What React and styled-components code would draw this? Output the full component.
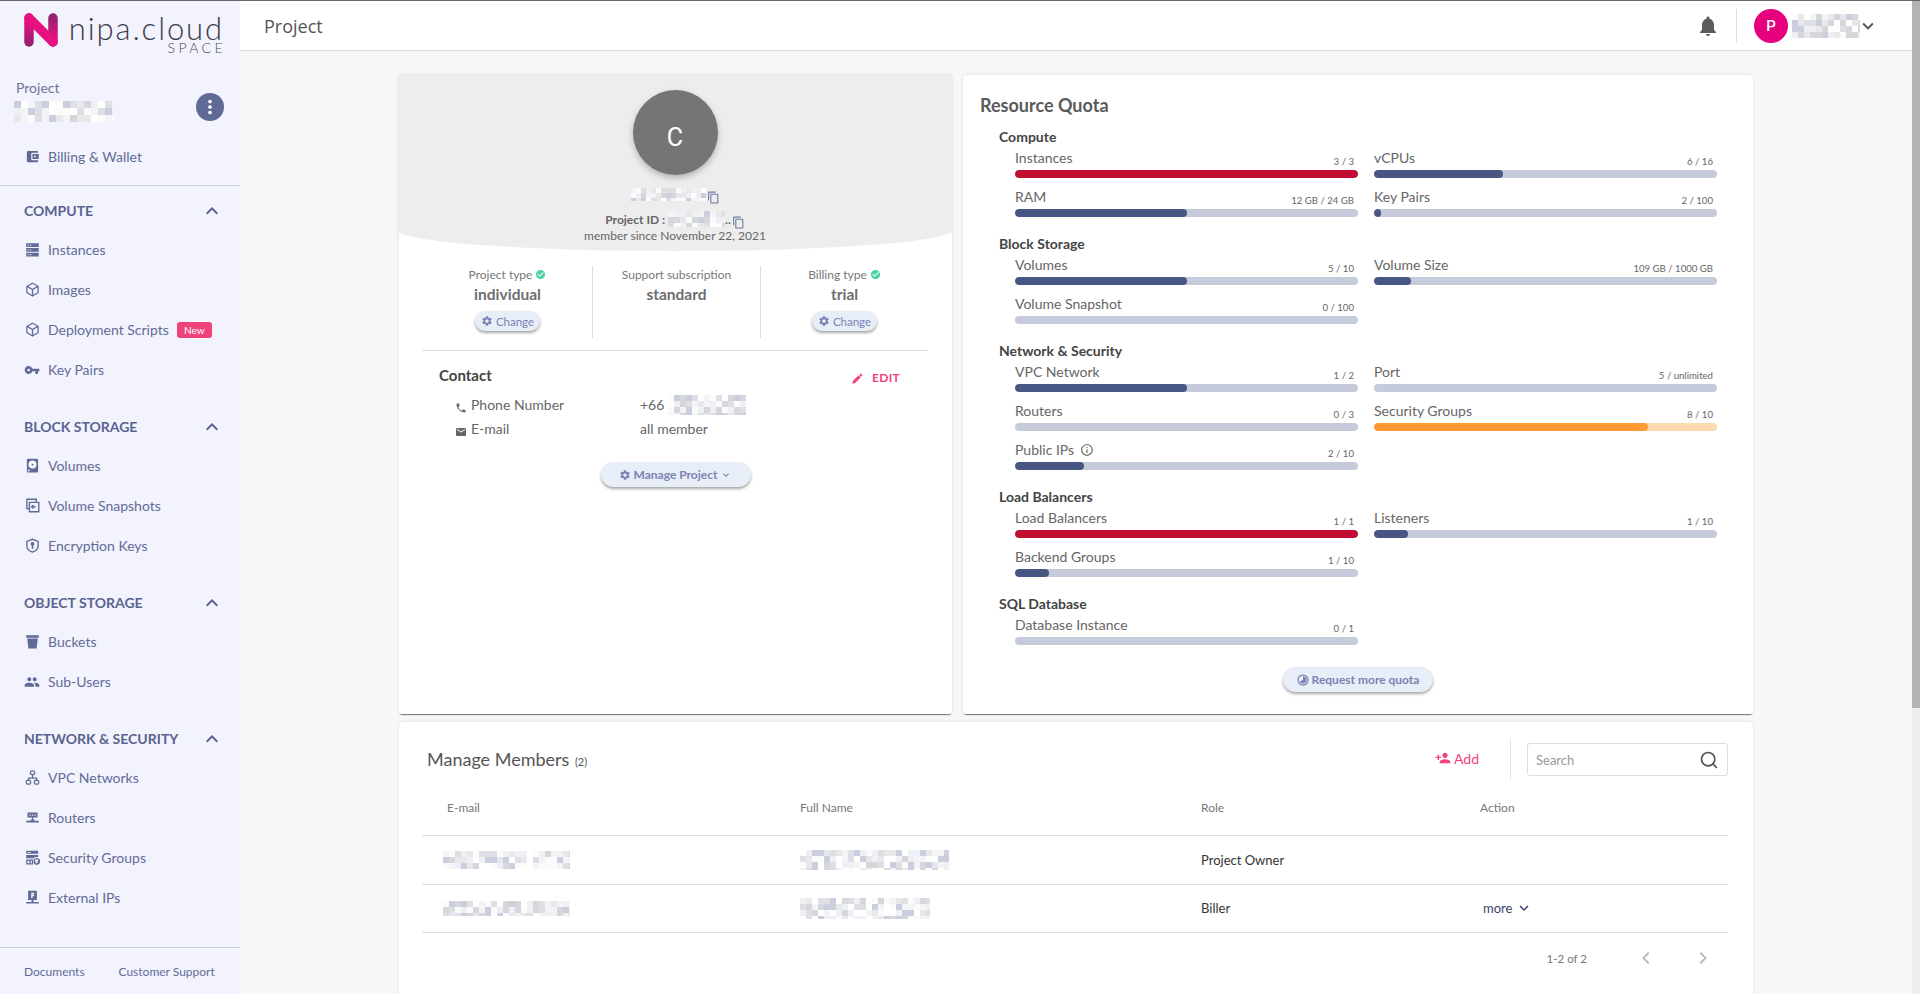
import React from 'react';
import styled, { createGlobalStyle } from 'styled-components';
import {
  MdAccountBalanceWallet, MdVpnKey, MdPeople, MdNotifications, MdSettings, MdCheckCircle,
  MdPhone, MdEmail, MdEdit, MdPersonAdd, MdContentCopy, MdInfoOutline, MdKeyboardArrowUp,
  MdKeyboardArrowDown, MdMoreVert, MdChevronLeft, MdChevronRight,
} from 'react-icons/md';
import { LuBox, LuSearch } from 'react-icons/lu';

const Global = createGlobalStyle`
  html, body { margin: 0; padding: 0; height: 100%; overflow: hidden; }
  body { font-family: Lato, "Open Sans", sans-serif; background: #f7f7f7; }
  * { box-sizing: border-box; }
`;

const Shell = styled.div`
  display: flex;
  height: 994px;
  border-top: 1px solid #666;
  overflow: hidden;
`;
const Sidebar = styled.aside`
  width: 240px;
  flex: none;
  display: flex;
  flex-direction: column;
  background: #f2f3fd;
  color: #636c97;
`;
const LogoBlock = styled.div`
  height: 60px;
  padding: 12px 0 0 24px;
  display: flex;
  align-items: flex-start;
`;
const LogoText = styled.div`
  margin-left: 11px;
  width: 155px;
  padding-top: 2px;
  display: flex;
  flex-direction: column;
  align-items: flex-end;
`;
const Wordmark = styled.span`
  font-size: 31px;
  line-height: 27px;
  font-weight: 300;
  letter-spacing: 1.9px;
  color: #3b3b49;
  white-space: nowrap;
`;
const SpaceMark = styled.span`
  font-size: 14px;
  line-height: 12px;
  font-weight: 300;
  letter-spacing: 3.4px;
  margin-right: -2px;
  color: #4a4a58;
`;
const ProjectBlock = styled.div`
  display: flex;
  justify-content: space-between;
  align-items: flex-end;
  padding: 17px 16px 15px 16px;
`;
const ProjectName = styled.div`
  font-size: 14px;
  line-height: 20px;
  color: #6d7599;
  & > svg { display: block; margin: 3px 0 0 -2px; }
`;
const Kebab = styled.div`
  width: 28px;
  height: 28px;
  margin-bottom: 1px;
  border-radius: 50%;
  background: #5f6a97;
  color: #fff;
  display: flex;
  align-items: center;
  justify-content: center;
  font-size: 22px;
`;
const TopNav = styled.div`
  padding-bottom: 8px;
  border-bottom: 1px solid #c9cde2;
`;
const NavGroups = styled.nav`
  padding-top: 4px;
  flex: 1;
`;
const NavGroup = styled.div`
  margin-bottom: 16px;
`;
const GroupHead = styled.div`
  height: 40px;
  padding: 1px 16px 0 24px;
  display: flex;
  align-items: center;
  justify-content: space-between;
  font-size: 14px;
  font-weight: 700;
  color: #5a6390;
  & > svg { font-size: 24px; }
`;
const NavItem = styled.div`
  height: 40px;
  padding: 0 0 1px 24px;
  display: flex;
  align-items: center;
  font-size: 14px;
  color: #636c97;
`;
const NavIcon = styled.span`
  width: 16px;
  margin-right: 8px;
  display: flex;
  justify-content: center;
  font-size: 15px;
  color: #5f6a97;
`;
const NewBadge = styled.span`
  margin-left: 8px;
  width: 35px;
  height: 16px;
  border-radius: 3px;
  background: #f0437b;
  color: #fff;
  font-size: 10px;
  line-height: 16px;
  text-align: center;
`;
const SideFooter = styled.div`
  height: 47px;
  border-top: 1px solid #c9cde2;
  padding: 0 0 0 24px;
  display: flex;
  align-items: center;
  font-size: 12px;
  color: #636c97;
  & > span:first-child { width: 94.5px; }
`;

const Main = styled.main`
  flex: 1;
  min-width: 0;
  display: flex;
  flex-direction: column;
`;
const Topbar = styled.header`
  height: 50px;
  flex: none;
  display: flex;
  align-items: center;
  padding: 0 33px 0 24px;
  background: #fff;
  border-bottom: 1px solid #ddd;
`;
const PageTitle = styled.h1`
  margin: 0 auto 0 0;
  font: 400 18px "Open Sans", sans-serif;
  color: #555;
`;
const Bell = styled.span`
  display: flex;
  font-size: 24px;
  color: #5c5c5c;
`;
const TopDivider = styled.span`
  width: 1px;
  height: 34px;
  background: #ddd;
  margin: 0 17px 0 16px;
`;
const Avatar = styled.span`
  width: 34px;
  height: 34px;
  border-radius: 50%;
  background: #e6007e;
  color: #fff;
  font: 500 15px Roboto, sans-serif;
  display: flex;
  align-items: center;
  justify-content: center;
`;
const UserChevron = styled.span`
  display: flex;
  font-size: 22px;
  color: #555;
  margin-left: -3px;
`;
const UserName = styled.span`
  display: flex;
  margin-left: 4px;
`;
const Scrollbar = styled.div`
  width: 8px;
  flex: none;
  background: #ededed;
`;
const Thumb = styled.div`
  height: 707px;
  background: #b3b3b3;
`;
const Content = styled.div`
  width: 1354px;
  margin: 0 auto;
  padding-top: 24px;
`;
const TopCards = styled.div`
  display: grid;
  grid-template-columns: 553px 790px;
  gap: 11px;
  height: 639px;
`;
const Card = styled.section`
  background: #fff;
  border-radius: 3px;
  box-shadow: 0 2px 1px -1px rgba(0, 0, 0, 0.5), 0 0 3px rgba(0, 0, 0, 0.12);
`;
const ProjectHero = styled.div`
  margin: -2px -1px 0 -2px;
  height: 178px;
  padding-top: 17px;
  background: #ededed;
  border-radius: 4px 4px 278px 278px / 4px 4px 21px 21px;
  display: flex;
  flex-direction: column;
  align-items: center;
  color: #666;
`;
const BigAvatar = styled.div`
  width: 85px;
  height: 85px;
  border-radius: 50%;
  background: #757575;
  color: #fff;
  font: 400 25px Roboto, sans-serif;
  display: flex;
  align-items: center;
  justify-content: center;
  padding-top: 9px;
  box-shadow: 0 3px 6px rgba(0, 0, 0, 0.25);
`;
const HeroLine = styled.div`
  display: flex;
  align-items: center;
  height: ${p => p.$h}px;
  margin-top: ${p => p.$top || 0}px;
  font-size: 12px;
  font-weight: ${p => (p.$bold ? 700 : 400)};
  white-space: nowrap;
`;
const CopyIcon = styled(MdContentCopy)`
  color: #6d7ba3;
  font-size: 13px;
  margin: 7px 0 0 1px;
  flex: none;
`;
const StatRow = styled.div`
  margin: 15px 24px 0 24px;
  display: grid;
  grid-template-columns: 169px 168px 1fr;
  height: 72px;
`;
const Stat = styled.div`
  display: flex;
  flex-direction: column;
  align-items: center;
  border-left: ${p => (p.$divided ? '1px solid #ddd' : 'none')};
`;
const StatLabel = styled.div`
  display: flex;
  align-items: center;
  height: 16px;
  font-size: 12px;
  color: #777;
  & > svg { color: #4ed3a4; font-size: 11px; margin-left: 3px; }
`;
const StatValue = styled.div`
  height: 24px;
  line-height: 24px;
  font-size: 15.5px;
  font-weight: 700;
  color: #6e6e6e;
`;
const SoftButton = styled.button`
  border: 0;
  background: #e8eef7;
  color: #7b82b5;
  font-family: Lato, sans-serif;
  font-weight: ${p => (p.$small ? 400 : 700)};
  font-size: ${p => (p.$small ? 11.5 : 12)}px;
  width: ${p => (p.$small ? 65 : 150)}px;
  height: ${p => (p.$small ? 20 : 25)}px;
  margin-top: ${p => p.$top || 0}px;
  padding: 0;
  border-radius: 13px;
  box-shadow: 0 2px 3px rgba(0, 0, 0, 0.35);
  display: flex;
  align-items: center;
  justify-content: center;
  gap: 3px;
  align-self: center;
  & > svg { font-size: 12px; flex: none; }
`;
const ManageWrap = styled.div`
  display: flex;
  justify-content: center;
  margin-top: 21px;
`;
const Rule = styled.hr`
  margin: 12px 24px 0 23px;
  border: 0;
  border-top: 1px solid #ddd;
`;
const Contact = styled.div`
  margin: 13px 0 0 40px;
  padding-right: 52px;
`;
const ContactHead = styled.div`
  height: 29px;
  display: flex;
  justify-content: space-between;
  align-items: flex-start;
  font-size: 15px;
  font-weight: 700;
  line-height: 22px;
  color: #444;
`;
const EditLink = styled.span`
  display: flex;
  align-items: center;
  gap: 8px;
  margin-top: 3px;
  font-size: 12px;
  font-weight: 700;
  line-height: 22px;
  letter-spacing: 0.3px;
  color: #f0437b;
  & > svg { font-size: 13px; }
`;
const ContactRow = styled.div`
  display: grid;
  grid-template-columns: 185px 1fr;
  height: 24px;
  padding-left: 16px;
  font-size: 14px;
  line-height: 24px;
  color: #666;
`;
const ContactLabel = styled.div`
  display: flex;
  align-items: center;
  gap: 4px;
  & > svg { font-size: 12px; margin-top: 5px; color: #666; }
`;
const ContactValue = styled.div`
  display: flex;
  align-items: center;
  gap: 4px;
  & > svg { flex: none; }
`;
const QuotaCard = styled(Card)`
  padding: 18px 36px 0 17px;
  display: flex;
  flex-direction: column;
`;
const QuotaTitle = styled.h2`
  margin: 0 0 9px;
  font-size: 18px;
  line-height: 24px;
  font-weight: 700;
  color: #5a5a5a;
`;
const QuotaSection = styled.div`
  padding-left: 19px;
  margin-bottom: 7px;
`;
const SectionTitle = styled.h3`
  margin: 0;
  font-size: 14px;
  line-height: 22px;
  font-weight: 700;
  color: #444;
`;
const QuotaGrid = styled.div`
  margin-left: 16px;
  display: grid;
  grid-template-columns: 343px 343px;
  column-gap: 16px;
`;
const QuotaItem = styled.div`
  margin-bottom: 9px;
`;
const QuotaHead = styled.div`
  height: 22px;
  display: flex;
  justify-content: space-between;
`;
const QuotaLabel = styled.span`
  display: flex;
  align-items: center;
  gap: 6px;
  font-size: 14px;
  line-height: 20px;
  height: 20px;
  color: #666;
  & > svg { font-size: 14px; }
`;
const QuotaValue = styled.span`
  align-self: flex-end;
  margin: 0 4px 1px 0;
  font-size: 9.6px;
  line-height: 14px;
  color: #666;
`;
const Track = styled.div`
  height: 8px;
  border-radius: 4px;
  overflow: hidden;
  background: ${p => (p.$tone === 'warn' ? '#fcd9ae' : '#c5cbdb')};
`;
const Fill = styled.div`
  height: 100%;
  border-radius: 4px;
  background: ${p => ({ full: '#c20d33', warn: '#ff9a33' }[p.$tone] || '#475682')};
`;
const RequestRow = styled.div`
  margin-top: 6px;
  display: flex;
  justify-content: center;
  padding-left: 19px;
`;
const MembersCard = styled.section`
  margin-top: 8px;
  height: 300px;
  padding-top: 21px;
  background: #fff;
  border-radius: 3px;
  box-shadow: 0 0 3px rgba(0, 0, 0, 0.12);
`;
const MembersHead = styled.div`
  height: 33px;
  padding: 0 25px 0 28px;
  display: flex;
  align-items: center;
`;
const MembersTitle = styled.h2`
  margin: -2px auto 0 0;
  font-size: 18px;
  font-weight: 400;
  color: #555;
  & > small { font-size: 11px; margin-left: 1px; }
`;
const AddLink = styled.span`
  display: flex;
  align-items: center;
  gap: 3px;
  font-size: 14px;
  color: #f0437b;
  margin-top: -3px;
  & > svg { font-size: 16px; }
`;
const HeadDivider = styled.span`
  width: 1px;
  height: 41px;
  background: #e2e2e2;
  margin: 0 16px 0 31px;
`;
const SearchBox = styled.div`
  width: 201px;
  height: 33px;
  padding: 0 8px;
  border: 1px solid #ddd;
  border-radius: 3px;
  display: flex;
  align-items: center;
  justify-content: space-between;
  font-size: 13px;
  color: #999;
  & > svg { font-size: 20px; color: #555; }
`;
const Table = styled.div`
  margin: 0 25px 0 23px;
`;
const TableRow = styled.div`
  display: grid;
  grid-template-columns: 378px 401px 279px 1fr;
  align-items: center;
  height: ${p => (p.$head ? 60 : 48.5)}px;
  padding-top: ${p => (p.$head ? 4 : 0)}px;
  border-bottom: 1px solid #ddd;
  font-size: ${p => (p.$head ? 12 : 13)}px;
  color: ${p => (p.$head ? '#777' : '#333')};
`;
const FirstCell = styled.div`
  padding-left: ${p => p.$inset}px;
  display: flex;
`;
const PlainCell = styled.div`
  display: flex;
`;
const MoreLink = styled.div`
  display: flex;
  align-items: center;
  gap: 3px;
  padding-left: 3px;
  font-size: 13px;
  color: #3c4368;
  & > svg { font-size: 18px; }
`;
const Pager = styled.div`
  height: 50px;
  padding-right: 38px;
  display: flex;
  align-items: center;
  justify-content: flex-end;
  font-size: 11.5px;
  color: #777;
`;
const PagerButton = styled.span`
  display: flex;
  margin-left: ${p => p.$gap}px;
  font-size: 24px;
  color: #bbb;
`;

/* ---------- drawings ---------- */
const Mosaic = ({ w, h, cell = 6, seed = 1 }) => {
  let s = seed * 9301 + 49297;
  const rnd = () => {
    s = (s * 9301 + 49297) % 233280;
    return s / 233280;
  };
  const palette = ['#ffffff', '#f4f4f6', '#e8e8ea', '#dddfe4', '#c9cfdf', '#eef0f5', '#d6d7da', '#fbfbfc'];
  const rects = [];
  for (let y = 0; y < h; y += cell) {
    for (let x = 0; x < w; x += cell) {
      rects.push(<rect key={`${x}-${y}`} x={x} y={y} width={cell} height={cell} fill={palette[Math.floor(rnd() * palette.length)]} />);
    }
  }
  return <svg width={w} height={h} viewBox={`0 0 ${w} ${h}`} shapeRendering="crispEdges">{rects}</svg>;
};

const NLogo = () => (
  <svg width="34" height="34" viewBox="0 0 34 34" fill="none" style={{ flex: 'none' }}>
    <defs>
      <linearGradient id="lg1" gradientUnits="userSpaceOnUse" x1="0" y1="8" x2="0" y2="34">
        <stop offset="0" stopColor="#e6107f" />
        <stop offset="1" stopColor="#8c246f" />
      </linearGradient>
      <linearGradient id="lg2" gradientUnits="userSpaceOnUse" x1="0" y1="26" x2="0" y2="0">
        <stop offset="0" stopColor="#e6107f" />
        <stop offset="1" stopColor="#86256e" />
      </linearGradient>
    </defs>
    <path d="M5 5V29" stroke="url(#lg1)" strokeWidth="9.500" strokeLinecap="round" />
    <path d="M29 5V29" stroke="url(#lg2)" strokeWidth="9.500" strokeLinecap="round" />
    <path d="M5 5L29 29" stroke="#e6107f" strokeWidth="9.500" strokeLinecap="round" />
  </svg>
);

const Svg = ({ children, size = 15 }) => (
  <svg width={size} height={size} viewBox="0 0 24 24" fill="currentColor">{children}</svg>
);
const ServerIcon = () => (
  <Svg><path fillRule="evenodd" d="M2 2h20v6H2zM2 9.500h20v6H2zM2 17h20v6H2zM4.500 4.500h2v1.500h-2zM8 4.500h2v1.500H8zM4.500 12h2v1.500h-2zM8 12h2v1.500H8zM4.500 19.500h2V21h-2zM8 19.500h2V21H8z" /></Svg>
);
const VolumeIcon = () => (
  <Svg><path fillRule="evenodd" d="M5 1h14a2 2 0 0 1 2 2v18a2 2 0 0 1-2 2H5a2 2 0 0 1-2-2V3a2 2 0 0 1 2-2zm7 3a6.500 6.500 0 1 0 0 13 6.500 6.500 0 0 0 0-13zm0 5a1.500 1.500 0 1 1 0 3 1.500 1.500 0 0 1 0-3zM6 18.500a1.500 1.500 0 1 0 0 3 1.500 1.500 0 0 0 0-3z" /></Svg>
);
const SnapshotIcon = () => (
  <Svg>
    <g fill="none" stroke="currentColor" strokeWidth="2.200">
      <path d="M7 17H3V2h15v4" />
      <path d="M7 7h15v15H7z" />
      <path d="M17 14h-6m2.500-3l-3 3 3 3" />
    </g>
  </Svg>
);
const ShieldKeyIcon = () => (
  <Svg>
    <path fill="none" stroke="currentColor" strokeWidth="2.200" d="M12 2l9 3.500v6.500c0 5-4 9-9 10.500C7 21 3 17 3 12V5.500z" />
    <path d="M12 6.500a3 3 0 0 1 1.300 5.700V17h-2.600v-4.800A3 3 0 0 1 12 6.500z" />
  </Svg>
);
const BucketIcon = () => (
  <Svg><path d="M2 2h20v4H2zM3.500 7h17L18.500 23h-13z" /></Svg>
);
const NetworkIcon = () => (
  <Svg>
    <g fill="none" stroke="currentColor" strokeWidth="2">
      <rect x="8.500" y="1.500" width="7" height="6" rx="3" />
      <rect x="2" y="16.500" width="7" height="6" rx="2" />
      <rect x="15" y="16.500" width="7" height="6" rx="2" />
      <path d="M12 8v5M5.500 16v-3h13v3" />
    </g>
  </Svg>
);
const RouterIcon = () => (
  <Svg><path fillRule="evenodd" d="M4 4h16v8h-7v3h2v2h7v3H2v-3h7v-2h2v-3H4zm3 3v2h2V7zm4 0v2h2V7zm4 0v2h2V7z" /></Svg>
);
const SecurityIcon = () => (
  <Svg>
    <path fillRule="evenodd" d="M2 1h19v5H2zM4 3v1.500h5V3zM2 8h19v3h-4.500l-2 1.500V13H2zM2 15h11v8H2zm2 2v4h3v-4zm5 0v4h2v-4z" />
    <path fillRule="evenodd" d="M18.500 12.500L24 15v4c0 2.500-2.500 4-5.500 5C15.500 23 14 21.500 14 19v-4zm0 2.500a1.500 1.500 0 0 0-1.500 3.500V21h3v-2.500a1.500 1.500 0 0 0-1.500-3.500z" />
  </Svg>
);
const ExternalIcon = () => (
  <Svg><path fillRule="evenodd" d="M5 1h14v15h-5.500v3H22v2.500H2V19h8.500v-3H5zm5 3.500V13h2v-3h2.500V4.500zm2 2h1V8h-1z" /></Svg>
);
const QuotaDial = () => (
  <svg width="12" height="12" viewBox="0 0 24 24" style={{ flex: 'none' }}>
    <circle cx="12" cy="12" r="10" fill="none" stroke="currentColor" strokeWidth="2.500" />
    <path d="M12 5a7 7 0 1 1-6.500 9.500L12 12z" fill="currentColor" />
  </svg>
);

/* ---------- data ---------- */
const navGroups = [
  { title: 'COMPUTE', items: [
    { label: 'Instances', icon: <ServerIcon /> },
    { label: 'Images', icon: <LuBox /> },
    { label: 'Deployment Scripts', icon: <LuBox />, badge: 'New' },
    { label: 'Key Pairs', icon: <MdVpnKey size={16} /> },
  ] },
  { title: 'BLOCK STORAGE', items: [
    { label: 'Volumes', icon: <VolumeIcon /> },
    { label: 'Volume Snapshots', icon: <SnapshotIcon /> },
    { label: 'Encryption Keys', icon: <ShieldKeyIcon /> },
  ] },
  { title: 'OBJECT STORAGE', items: [
    { label: 'Buckets', icon: <BucketIcon /> },
    { label: 'Sub-Users', icon: <MdPeople size={16} /> },
  ] },
  { title: 'NETWORK & SECURITY', items: [
    { label: 'VPC Networks', icon: <NetworkIcon /> },
    { label: 'Routers', icon: <RouterIcon /> },
    { label: 'Security Groups', icon: <SecurityIcon /> },
    { label: 'External IPs', icon: <ExternalIcon /> },
  ] },
];

const quota = [
  { title: 'Compute', items: [
    { label: 'Instances', value: '3 / 3', pct: 100, tone: 'full' },
    { label: 'vCPUs', value: '6 / 16', pct: 37.5 },
    { label: 'RAM', value: '12 GB / 24 GB', pct: 50 },
    { label: 'Key Pairs', value: '2 / 100', pct: 2 },
  ] },
  { title: 'Block Storage', items: [
    { label: 'Volumes', value: '5 / 10', pct: 50 },
    { label: 'Volume Size', value: '109 GB / 1000 GB', pct: 10.9 },
    { label: 'Volume Snapshot', value: '0 / 100', pct: 0 },
  ] },
  { title: 'Network & Security', items: [
    { label: 'VPC Network', value: '1 / 2', pct: 50 },
    { label: 'Port', value: '5 / unlimited', pct: 0 },
    { label: 'Routers', value: '0 / 3', pct: 0 },
    { label: 'Security Groups', value: '8 / 10', pct: 80, tone: 'warn' },
    { label: 'Public IPs', value: '2 / 10', pct: 20, info: true },
  ] },
  { title: 'Load Balancers', items: [
    { label: 'Load Balancers', value: '1 / 1', pct: 100, tone: 'full' },
    { label: 'Listeners', value: '1 / 10', pct: 10 },
    { label: 'Backend Groups', value: '1 / 10', pct: 10 },
  ] },
  { title: 'SQL Database', items: [
    { label: 'Database Instance', value: '0 / 1', pct: 0 },
  ] },
];

const members = [
  { email: [127, 18, 3], name: [149, 20, 4], role: 'Project Owner' },
  { email: [127, 15, 5], name: [130, 21, 6], role: 'Biller', more: true },
];

export default function App() {
  return (
    <>
      <Global />
      <Shell>
        <Sidebar>
          <LogoBlock>
            <NLogo />
            <LogoText>
              <Wordmark>nipa.cloud</Wordmark>
              <SpaceMark>SPACE</SpaceMark>
            </LogoText>
          </LogoBlock>
          <ProjectBlock>
            <ProjectName>
              Project
              <Mosaic w={100} h={21} cell={7} seed={7} />
            </ProjectName>
            <Kebab><MdMoreVert /></Kebab>
          </ProjectBlock>
          <TopNav>
            <NavItem>
              <NavIcon><MdAccountBalanceWallet size={15} /></NavIcon>
              Billing &amp; Wallet
            </NavItem>
          </TopNav>
          <NavGroups>
            {navGroups.map(group => (
              <NavGroup key={group.title}>
                <GroupHead>
                  {group.title}
                  <MdKeyboardArrowUp />
                </GroupHead>
                {group.items.map(item => (
                  <NavItem key={item.label}>
                    <NavIcon>{item.icon}</NavIcon>
                    {item.label}
                    {item.badge && <NewBadge>{item.badge}</NewBadge>}
                  </NavItem>
                ))}
              </NavGroup>
            ))}
          </NavGroups>
          <SideFooter>
            <span>Documents</span>
            <span>Customer Support</span>
          </SideFooter>
        </Sidebar>

        <Main>
          <Topbar>
            <PageTitle>Project</PageTitle>
            <Bell><MdNotifications /></Bell>
            <TopDivider />
            <Avatar>P</Avatar>
            <UserName><Mosaic w={68} h={24} cell={6} seed={11} /></UserName>
            <UserChevron><MdKeyboardArrowDown /></UserChevron>
          </Topbar>
          <Content>
            <TopCards>
              <Card>
                <ProjectHero>
                  <BigAvatar>C</BigAvatar>
                  <HeroLine $h={20} $top={9}>
                    <Mosaic w={75} h={13} cell={5} seed={3} />
                    <CopyIcon />
                  </HeroLine>
                  <HeroLine $h={16} $top={7} $bold>
                    Project ID :&nbsp;
                    <Mosaic w={57} h={16} cell={6} seed={9} />
                    ..
                    <CopyIcon />
                  </HeroLine>
                  <HeroLine $h={16}>member since November 22, 2021</HeroLine>
                </ProjectHero>
                <StatRow>
                  <Stat>
                    <StatLabel>Project type <MdCheckCircle /></StatLabel>
                    <StatValue>individual</StatValue>
                    <SoftButton $small $top={5}><MdSettings /> Change</SoftButton>
                  </Stat>
                  <Stat $divided>
                    <StatLabel>Support subscription</StatLabel>
                    <StatValue>standard</StatValue>
                  </Stat>
                  <Stat $divided>
                    <StatLabel>Billing type <MdCheckCircle /></StatLabel>
                    <StatValue>trial</StatValue>
                    <SoftButton $small $top={5}><MdSettings /> Change</SoftButton>
                  </Stat>
                </StatRow>
                <Rule />
                <Contact>
                  <ContactHead>
                    Contact
                    <EditLink><MdEdit /> EDIT</EditLink>
                  </ContactHead>
                  <ContactRow>
                    <ContactLabel><MdPhone /> Phone Number</ContactLabel>
                    <ContactValue>+66 <Mosaic w={78} h={20} cell={6} seed={5} /></ContactValue>
                  </ContactRow>
                  <ContactRow>
                    <ContactLabel><MdEmail /> E-mail</ContactLabel>
                    <ContactValue>all member</ContactValue>
                  </ContactRow>
                </Contact>
                <ManageWrap>
                  <SoftButton><MdSettings /> Manage Project <MdKeyboardArrowDown /></SoftButton>
                </ManageWrap>
              </Card>

              <QuotaCard>
                <QuotaTitle>Resource Quota</QuotaTitle>
                {quota.map(section => (
                  <QuotaSection key={section.title}>
                    <SectionTitle>{section.title}</SectionTitle>
                    <QuotaGrid>
                      {section.items.map(item => (
                        <QuotaItem key={item.label}>
                          <QuotaHead>
                            <QuotaLabel>
                              {item.label}
                              {item.info && <MdInfoOutline />}
                            </QuotaLabel>
                            <QuotaValue>{item.value}</QuotaValue>
                          </QuotaHead>
                          <Track $tone={item.tone}>
                            <Fill $tone={item.tone} style={{ width: `${item.pct}%` }} />
                          </Track>
                        </QuotaItem>
                      ))}
                    </QuotaGrid>
                  </QuotaSection>
                ))}
                <RequestRow>
                  <SoftButton><QuotaDial /> Request more quota</SoftButton>
                </RequestRow>
              </QuotaCard>
            </TopCards>

            <MembersCard>
              <MembersHead>
                <MembersTitle>Manage Members <small>(2)</small></MembersTitle>
                <AddLink><MdPersonAdd /> Add</AddLink>
                <HeadDivider />
                <SearchBox>Search <LuSearch /></SearchBox>
              </MembersHead>
              <Table>
                <TableRow $head>
                  <FirstCell $inset={25}>E-mail</FirstCell>
                  <PlainCell>Full Name</PlainCell>
                  <PlainCell>Role</PlainCell>
                  <PlainCell>Action</PlainCell>
                </TableRow>
                {members.map(m => (
                  <TableRow key={m.role}>
                    <FirstCell $inset={21}><Mosaic w={m.email[0]} h={m.email[1]} cell={6} seed={m.email[2]} /></FirstCell>
                    <PlainCell><Mosaic w={m.name[0]} h={m.name[1]} cell={6} seed={m.name[2]} /></PlainCell>
                    <PlainCell>{m.role}</PlainCell>
                    <PlainCell>{m.more && <MoreLink>more <MdKeyboardArrowDown /></MoreLink>}</PlainCell>
                  </TableRow>
                ))}
              </Table>
              <Pager>
                1-2 of 2
                <PagerButton $gap={47}><MdChevronLeft /></PagerButton>
                <PagerButton $gap={33}><MdChevronRight /></PagerButton>
              </Pager>
            </MembersCard>
          </Content>
        </Main>
        <Scrollbar><Thumb /></Scrollbar>
      </Shell>
    </>
  );
}
